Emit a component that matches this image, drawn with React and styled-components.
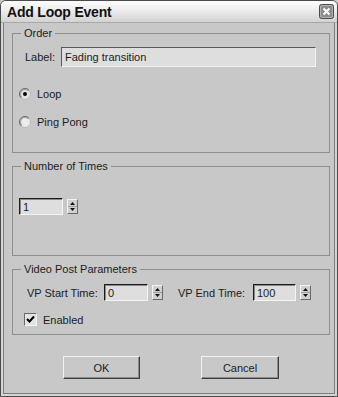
import React from 'react';
import styled, { createGlobalStyle } from 'styled-components';

const GlobalStyle = createGlobalStyle`
  html, body {
    margin: 0;
    padding: 0;
    background: #c8c8c8;
  }
  body {
    font-family: "Liberation Sans", Arial, sans-serif;
    font-size: 11px;
    color: #1c1c1c;
  }
`;

//SMALL DRAWN CONTROLS
const Radio = ({ checked }) => (
  <svg width="12" height="12" viewBox="0 0 12 12">
    <circle cx="6" cy="6" r="5.5" fill={checked ? '#e2e2e2' : '#ececec'} stroke="#b8b8b8" />
    <path d="M2.1 9.9 A5.5 5.5 0 0 1 9.9 2.1" fill="none" stroke="#6a6a6a" />
    <path d="M2.8 9.2 A4.5 4.5 0 0 1 9.2 2.8" fill="none" stroke="#9a9a9a" />
    {checked && <circle cx="6" cy="6" r="2" fill="#000" />}
  </svg>
);

const SpinArrows = () => (
  <svg width="9" height="13" viewBox="0 0 9 13">
    <path d="M4.5 2 L7 5 L2 5 Z" fill="#111" />
    <path d="M2 8 L7 8 L4.5 11 Z" fill="#111" />
    <line x1="0" y1="6.5" x2="9" y2="6.5" stroke="#a0a0a0" />
  </svg>
);

const CloseIcon = () => (
  <svg width="15" height="15" viewBox="0 0 15 15">
    <rect x="0.5" y="0.5" width="14" height="14" rx="2" fill="#8c8c8c" stroke="#4a4a4a" />
    <rect x="1.5" y="1.5" width="12" height="12" rx="1.5" fill="none" stroke="#b4b4b4" />
    <path d="M4.5 4.5 L10.5 10.5 M10.5 4.5 L4.5 10.5" stroke="#fff" strokeWidth="2" />
  </svg>
);

const Spinner = ({ value, width }) => (
  <SpinWrap>
    <NumField $w={width}>{value}</NumField>
    <SpinButton>
      <SpinArrows />
    </SpinButton>
  </SpinWrap>
);

const App = () => {
  return (
    <>
      <GlobalStyle />
      <Window>
        <TitleBar>
          <Title>Add Loop Event</Title>
          <CloseIcon />
        </TitleBar>
        <Frame>
          <Body>
            <Group $h={126}>
              <Legend>Order</Legend>
              <GroupContent $pad="7px 0 0 6px">
                <LabelRow>
                  <FieldLabel>Label:</FieldLabel>
                  <TextField>Fading transition</TextField>
                </LabelRow>
                <RadioRow $top={20}>
                  <Radio checked />
                  <span>Loop</span>
                </RadioRow>
                <RadioRow $top={15}>
                  <Radio />
                  <span>Ping Pong</span>
                </RadioRow>
              </GroupContent>
            </Group>

            <Group $h={96}>
              <Legend>Number of Times</Legend>
              <GroupContent $pad="25px 0 0 6px">
                <Spinner value="1" width={44} />
              </GroupContent>
            </Group>

            <Group $h={72}>
              <Legend>Video Post Parameters</Legend>
              <GroupContent $pad="8px 0 0 11px">
                <ParamRow>
                  <ParamLabel $w={77}>VP Start Time:</ParamLabel>
                  <Spinner value="0" width={44} />
                  <ParamLabel $w={75} $gap={15}>VP End Time:</ParamLabel>
                  <Spinner value="100" width={43} />
                </ParamRow>
                <CheckRow>
                  <CheckBox>
                    <svg width="11" height="11" viewBox="0 0 11 11">
                      <path d="M2 5 L4.5 7.5 L9 2.5" fill="none" stroke="#000" strokeWidth="2" />
                    </svg>
                  </CheckBox>
                  <span>Enabled</span>
                </CheckRow>
              </GroupContent>
            </Group>

            <ButtonBar>
              <DialogButton $w={77}>OK</DialogButton>
              <DialogButton $w={78}>Cancel</DialogButton>
            </ButtonBar>
          </Body>
        </Frame>
      </Window>
    </>
  );
};

const Window = styled.div`
  width: 338px;
  height: 397px;
  box-sizing: border-box;
  border: 1px solid #4a4a4a;
  border-radius: 6px 6px 0 0;
  display: flex;
  flex-direction: column;
  overflow: hidden;
  background: #d2d2d2;
`;

const TitleBar = styled.div`
  height: 21px;
  flex: 0 0 21px;
  display: flex;
  align-items: center;
  justify-content: space-between;
  padding: 0 3px 0 6px;
  background: linear-gradient(#fdfdfd, #ededed 45%, #d2d2d2);
  border-bottom: 1px solid #a8a8a8;
`;

const Title = styled.div`
  font-weight: bold;
  font-size: 14px;
  color: #111;
  letter-spacing: -0.2px;
`;

const Frame = styled.div`
  flex: 1;
  display: flex;
  padding: 0 2px 2px 2px;
  background: #d4d4d4;
`;

const Body = styled.div`
  flex: 1;
  display: flex;
  flex-direction: column;
  gap: 7px;
  padding: 4px 4px 0 8px;
  background: #c8c8c8;
  border: 1px solid #7c7c7c;
  border-top: none;
`;

const Group = styled.fieldset`
  margin: 0;
  padding: 0;
  min-width: 0;
  height: ${p => p.$h}px;
  box-sizing: border-box;
  border: 1px solid #8e8e8e;
`;

const Legend = styled.legend`
  margin-left: 8px;
  padding: 0 3px;
  line-height: 13px;
  font-size: 11px;
  color: #1c1c1c;
`;

const GroupContent = styled.div`
  display: flex;
  flex-direction: column;
  align-items: flex-start;
  padding: ${p => p.$pad};
`;

const LabelRow = styled.div`
  display: flex;
  align-items: center;
  margin-left: 6px;
`;

const FieldLabel = styled.span`
  width: 36px;
`;

const TextField = styled.div`
  width: 255px;
  height: 20px;
  box-sizing: border-box;
  padding: 0 0 0 3px;
  display: flex;
  align-items: center;
  font-size: 11px;
  background: #dedede;
  border: 1px solid;
  border-color: #5a5a5a #f2f2f2 #f2f2f2 #5a5a5a;
`;

const RadioRow = styled.div`
  display: flex;
  align-items: center;
  gap: 6px;
  height: 13px;
  margin-top: ${p => p.$top}px;
`;

const SpinWrap = styled.div`
  display: flex;
  align-items: center;
`;

const NumField = styled.div`
  width: ${p => p.$w}px;
  height: 17px;
  box-sizing: border-box;
  padding-left: 3px;
  display: flex;
  align-items: center;
  font-size: 11px;
  background: #dedede;
  border: 1px solid;
  border-color: #1a1a1a #f4f4f4 #f4f4f4 #1a1a1a;
  box-shadow: inset 1px 1px 0 #8a8a8a;
`;

const SpinButton = styled.div`
  margin-left: 4px;
  width: 11px;
  height: 15px;
  box-sizing: border-box;
  display: flex;
  align-items: center;
  justify-content: center;
  background: #d0d0d0;
  border: 1px solid;
  border-color: #f4f4f4 #6a6a6a #6a6a6a #f4f4f4;
`;

const ParamRow = styled.div`
  display: flex;
  align-items: center;
  margin-left: 3px;
`;

const ParamLabel = styled.span`
  width: ${p => p.$w}px;
  margin-left: ${p => p.$gap || 0}px;
  white-space: nowrap;
`;

const CheckRow = styled.div`
  display: flex;
  align-items: center;
  gap: 6px;
  margin-top: 12px;
`;

const CheckBox = styled.div`
  width: 13px;
  height: 13px;
  box-sizing: border-box;
  display: flex;
  align-items: center;
  justify-content: center;
  background: #e4e4e4;
  border: 1px solid;
  border-color: #6a6a6a #f4f4f4 #f4f4f4 #6a6a6a;
`;

const ButtonBar = styled.div`
  display: flex;
  justify-content: center;
  gap: 61px;
  margin-top: 14px;
`;

const DialogButton = styled.button`
  width: ${p => p.$w}px;
  height: 23px;
  padding: 0;
  font-family: "Liberation Sans", Arial, sans-serif;
  font-size: 11px;
  color: #1c1c1c;
  background: #c8c8c8;
  border: 1px solid;
  border-color: #f2f2f2 #3c3c3c #3c3c3c #f2f2f2;
  box-shadow: inset -1px -1px 0 #8c8c8c;
`;

export default App;
